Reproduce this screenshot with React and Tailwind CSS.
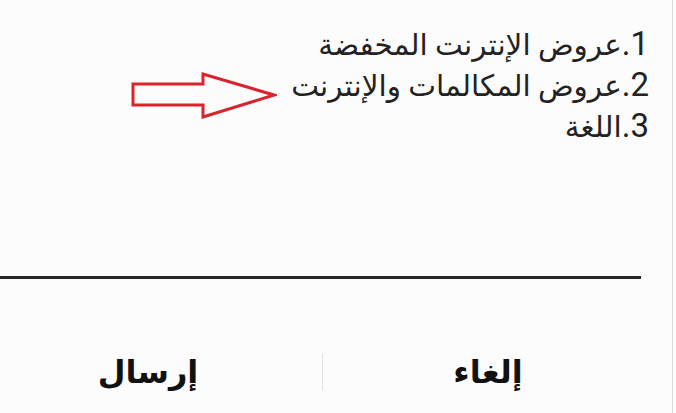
export default function App() {
  const items = [
    ["1.", "عروض الإنترنت المخفضة"],
    ["2.", "عروض المكالمات والإنترنت"],
    ["3.", "اللغة"],
  ];
  return (
    <div className="w-[676px] h-[413px] bg-[#fdfcfd] flex overflow-hidden">
      <div className="w-[672px] h-full flex flex-col">
        <div className="relative h-[276px]">
          <div
            dir="rtl"
            className="pt-[24px] pr-[23px] text-[33px] leading-[39px] text-[#222]"
            style={{ fontFamily: 'Roboto, "DejaVu Sans", sans-serif' }}
          >
            {items.map(([n, t]) => (
              <div key={n}>
                {n}
                <span className="text-[29.5px]">{t}</span>
              </div>
            ))}
          </div>
          <svg
            className="absolute left-[131px] top-[72px]"
            width="146"
            height="47"
            viewBox="0 0 146 47"
          >
            <path
              d="M2 12 H72 V2 L143 23 L72 45 V33 H2 Z"
              fill="none"
              stroke="#d9232d"
              strokeWidth="3"
              strokeLinejoin="miter"
            />
          </svg>
        </div>
        <div className="w-[641px] h-[3px] bg-[#262626]" />
        <div
          className="flex items-center h-[134px] pt-[52px] text-[32px] font-bold text-[#111]"
          dir="ltr"
          style={{ fontFamily: '"DejaVu Sans", sans-serif' }}
        >
          <div className="w-[296px] text-center">إرسال</div>
          <div className="ml-[26px] w-px h-[36px] bg-[#e2e2e2]" />
          <div className="w-[330px] text-center">إلغاء</div>
        </div>
      </div>
      <div className="w-[1px] h-full bg-[#dcd8d8]" />
    </div>
  );
}
